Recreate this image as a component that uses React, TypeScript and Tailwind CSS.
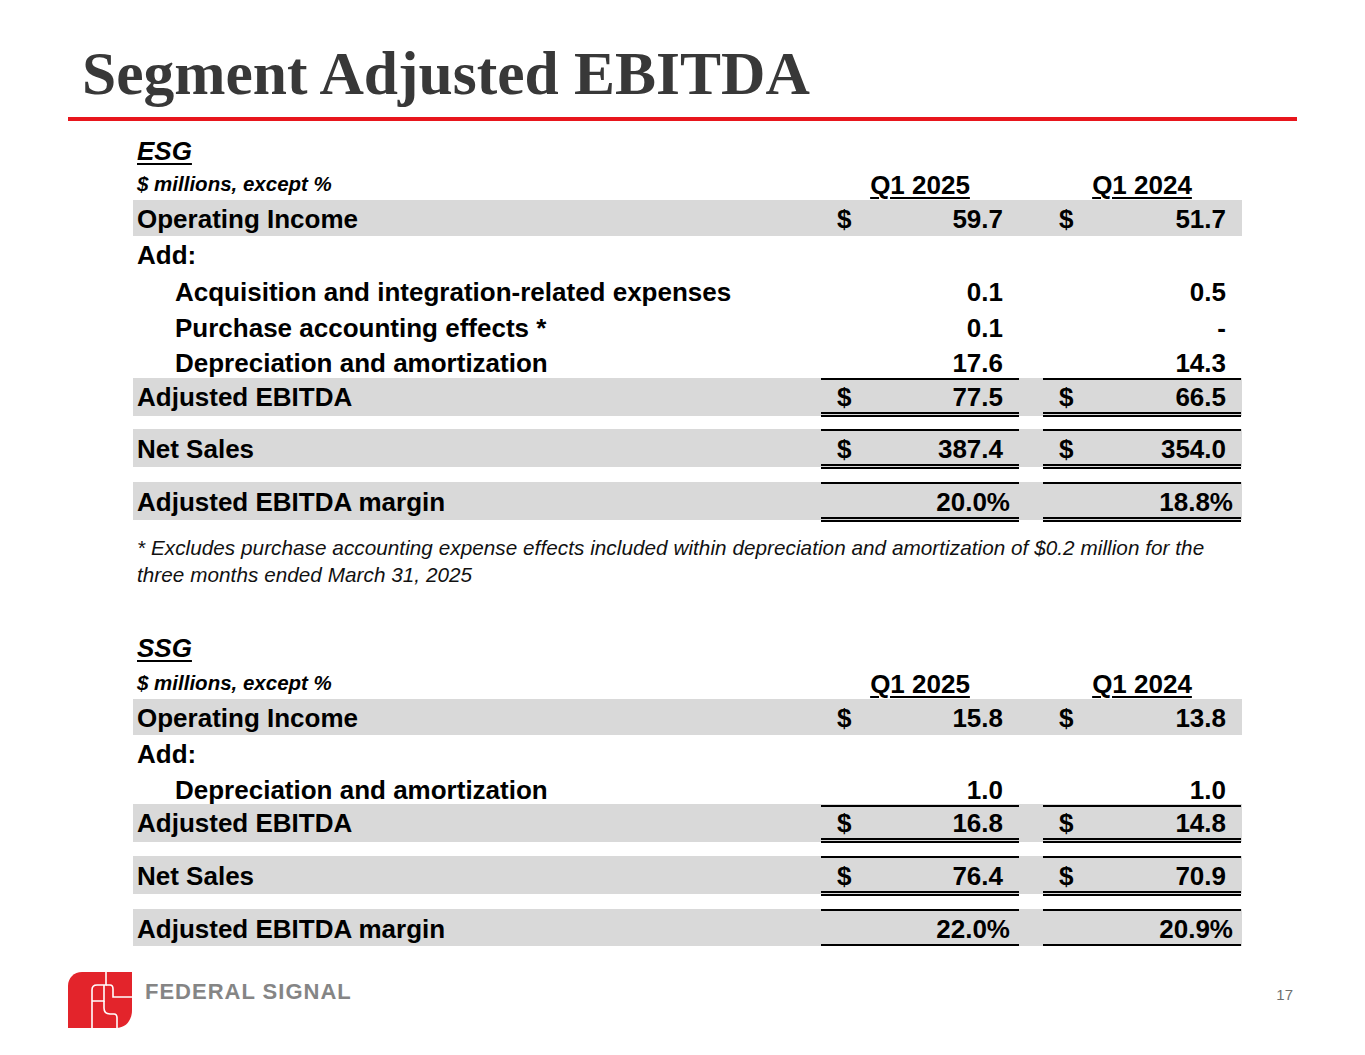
import clsx from "clsx";

type Line = "single" | "double";

type Row = {
  label: string;
  h: number;
  band?: boolean;
  indent?: boolean;
  v1?: string;
  v2?: string;
  dollar?: boolean;
  pct?: boolean;
  top?: boolean;
  bottom?: Line;
  spacer?: boolean;
};

const esgRows: Row[] = [
  { label: "Operating Income", h: 36, band: true, v1: "59.7", v2: "51.7", dollar: true },
  { label: "Add:", h: 37 },
  { label: "Acquisition and integration-related expenses", h: 36, indent: true, v1: "0.1", v2: "0.5" },
  { label: "Purchase accounting effects *", h: 35, indent: true, v1: "0.1", v2: "-" },
  { label: "Depreciation and amortization", h: 34, indent: true, v1: "17.6", v2: "14.3", bottom: "single" },
  { label: "Adjusted EBITDA", h: 38, band: true, v1: "77.5", v2: "66.5", dollar: true, bottom: "double" },
  { label: "", h: 13, spacer: true },
  { label: "Net Sales", h: 38, band: true, v1: "387.4", v2: "354.0", dollar: true, top: true, bottom: "double" },
  { label: "", h: 15, spacer: true },
  { label: "Adjusted EBITDA margin", h: 38, band: true, v1: "20.0%", v2: "18.8%", pct: true, top: true, bottom: "double" },
];

const ssgRows: Row[] = [
  { label: "Operating Income", h: 36, band: true, v1: "15.8", v2: "13.8", dollar: true },
  { label: "Add:", h: 36 },
  { label: "Depreciation and amortization", h: 33, indent: true, v1: "1.0", v2: "1.0", bottom: "single" },
  { label: "Adjusted EBITDA", h: 38, band: true, v1: "16.8", v2: "14.8", dollar: true, bottom: "double" },
  { label: "", h: 14, spacer: true },
  { label: "Net Sales", h: 38, band: true, v1: "76.4", v2: "70.9", dollar: true, top: true, bottom: "double" },
  { label: "", h: 15, spacer: true },
  { label: "Adjusted EBITDA margin", h: 37, band: true, v1: "22.0%", v2: "20.9%", pct: true, top: true, bottom: "single" },
];

function Cell({ row, value, second }: { row: Row; value?: string; second?: boolean }) {
  return (
    <div
      className={clsx(
        "flex h-full items-start justify-between border-black pl-[16px]",
        row.pct ? (second ? "pr-[8px]" : "pr-[9px]") : second ? "pr-[15px]" : "pr-[16px]",
        row.top ? "border-t-2 pt-[3px]" : "pt-[4px]",
        row.bottom === "single" && "border-b-2",
        row.bottom === "double" && "border-b-[5px] border-double"
      )}
    >
      <span>{row.dollar ? "$" : ""}</span>
      <span>{value}</span>
    </div>
  );
}

function Section({
  name,
  headH,
  colH,
  headPt,
  colPt,
  rows,
}: {
  name: string;
  headH: number;
  colH: number;
  headPt: number;
  colPt: number;
  rows: Row[];
}) {
  return (
    <div className="ml-[133px] w-[1109px] text-[26px] font-bold leading-[30px] text-black">
      <div className="pl-[4px]" style={{ height: headH, paddingTop: headPt }}>
        <span className="italic underline decoration-2 underline-offset-[3px]">{name}</span>
      </div>
      <div className="grid grid-cols-[688px_198px_24px_198px] items-start" style={{ height: colH, paddingTop: colPt }}>
        <div className="pl-[4px] text-[20.5px] italic">$ millions, except %</div>
        <div className="pt-[1px] text-center underline decoration-2 underline-offset-[3px]">Q1 2025</div>
        <div />
        <div className="pt-[1px] text-center underline decoration-2 underline-offset-[3px]">Q1 2024</div>
      </div>
      {rows.map((r, i) =>
        r.spacer ? (
          <div key={i} style={{ height: r.h }} />
        ) : (
          <div
            key={i}
            className={clsx("grid grid-cols-[688px_198px_24px_198px] items-stretch", r.band && "bg-[#d9d9d9]")}
            style={{ height: r.h }}
          >
            <div className={clsx(r.top ? "pt-[5px]" : "pt-[4px]", r.indent ? "pl-[42px]" : "pl-[4px]")}>{r.label}</div>
            {r.v1 !== undefined ? <Cell row={r} value={r.v1} /> : <div />}
            <div />
            {r.v2 !== undefined ? <Cell row={r} value={r.v2} second /> : <div />}
          </div>
        )
      )}
    </div>
  );
}

function Logo() {
  return (
    <svg width="64" height="56" viewBox="0 0 64 56">
      <path d="M0 56 V14 C0 6 6 0 14 0 H64 V38 C64 48 58 56 48 56 Z" fill="#e3242b" />
      <g fill="none" stroke="#ffffff" strokeWidth="1.6">
        <path d="M24 57 V18 C24 15 26 13 29 13 H38 V-1" />
        <path d="M24 29 H36 V13" />
        <path d="M38 13 H42 C44 13 45 15 45 17 V25 H64" />
        <path d="M36 29 V36 C36 40 38 42 42 42 H46 C48 42 49 44 49 46 V57" />
      </g>
    </svg>
  );
}

export default function App() {
  return (
    <div className="relative h-[1055px] w-[1365px] overflow-hidden bg-white font-['Liberation_Sans',Arial,sans-serif]">
      <div className="pt-[37px] pl-[82px]">
        <h1 className="font-['Liberation_Serif','Times_New_Roman',serif] h-[73px] text-[61.5px] font-bold leading-[72px] text-[#383838]">
          Segment Adjusted EBITDA
        </h1>
      </div>
      <div className="mt-[7px] ml-[68px] h-[4px] w-[1229px] bg-[#e8161d]" />
      <div className="mt-[12px]">
        <Section name="ESG" headH={36} colH={31} headPt={3} colPt={0} rows={esgRows} />
      </div>
      <div className="ml-[137px] mt-[14px] text-[20.7px] italic leading-[27px] tracking-[0.05px] text-[#111]">
        <p>* Excludes purchase accounting expense effects included within depreciation and amortization of $0.2 million for the</p>
        <p>three months ended March 31, 2025</p>
      </div>
      <div className="mt-[42px]">
        <Section name="SSG" headH={37} colH={32} headPt={3} colPt={1} rows={ssgRows} />
      </div>
      <div className="mt-[26px] flex items-start justify-between pl-[68px] pr-[72px]">
        <div className="flex items-start gap-[13px]">
          <Logo />
          <div className="mt-[7px] text-[22px] font-bold leading-[26px] tracking-[1px] text-[#858585]">FEDERAL SIGNAL</div>
        </div>
        <div className="mt-[14px] text-[15px] leading-[18px] text-[#6f6f6f]">17</div>
      </div>
    </div>
  );
}
